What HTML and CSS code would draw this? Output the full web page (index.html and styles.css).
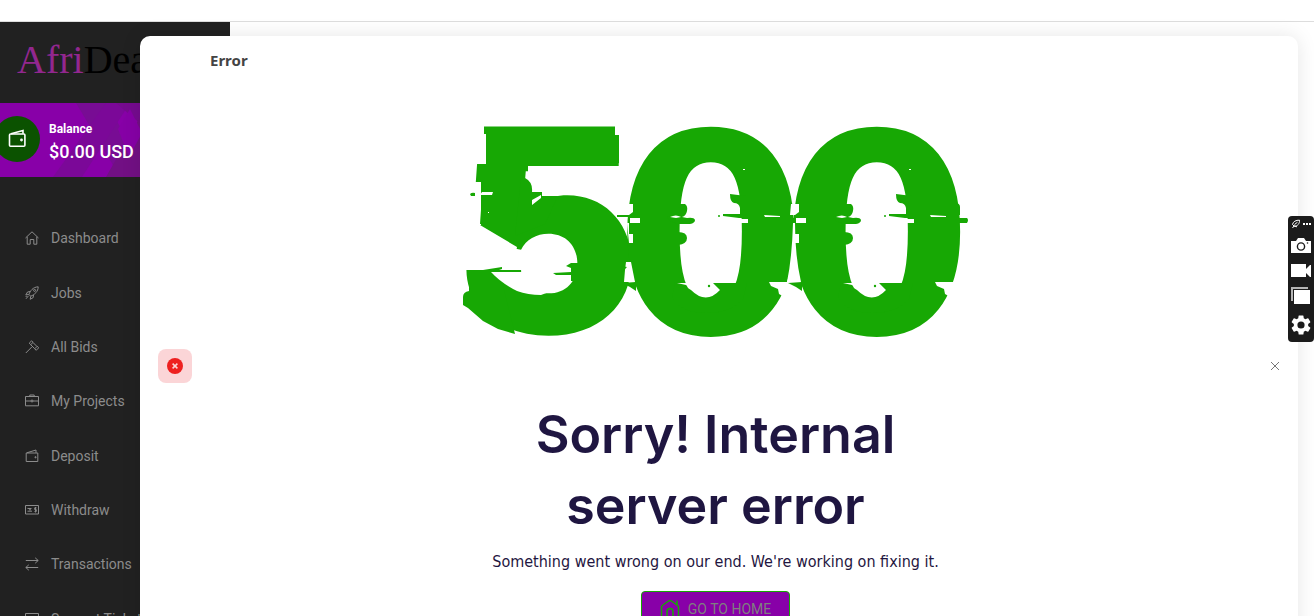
FILE: index.html
```html
<!DOCTYPE html>
<html lang="en">
<head>
  <meta charset="UTF-8">
  <meta name="viewport" content="width=device-width, initial-scale=1.0">
  <title>AfriDeal - Error 500</title>
  <link rel="stylesheet" href="styles.css">
</head>
<body>

  <header class="topbar"></header>

  <aside class="sidebar">
    <a class="logo" href="#"><span>Afri</span>Deal</a>

    <div class="balance">
      <svg class="balance-pattern" viewBox="0 0 180 74" aria-hidden="true">
        <path d="M26 0h30l44 74H70z" fill="#780c94"/>
        <path d="M56 0h24L32 74H3z" fill="#7b0898"/>
        <path d="M66 0h40l-14 22z" fill="#750b8e"/>
        <path d="M56 74l17-30 17-30 34 60z" fill="#721084"/>
        <path d="M68 26l12-20 12 24-13 24z" fill="#8600a6"/>
        <path d="M100 0h80v74h-50z" fill="#74108a"/>
      </svg>
      <div class="balance-icon">
        <svg viewBox="0 0 20 20" width="20" height="20" fill="none" stroke="#fff" stroke-width="1.6">
          <rect x="2.500" y="5" width="15.400" height="12.200" rx="1"/>
          <path d="M4 4.800L16 1.500v3.300"/>
          <circle cx="14.500" cy="11" r=".6"/>
        </svg>
      </div>
      <div class="balance-text">
        <span class="balance-label">Balance</span>
        <span class="balance-amount">$0.00 USD</span>
      </div>
    </div>

    <nav class="menu">
      <a class="menu-link" href="#">
        <svg viewBox="0 0 14 14"><path d="M.5 7L7 .8 13.500 7M2.200 5.800v7.400h3V8.500h3.600v4.700h3V5.800"/></svg>Dashboard</a>
      <a class="menu-link" href="#">
        <svg viewBox="0 0 14 14"><path d="M4 8.500C5 5 8 1 13.200.8 13.200 5.500 9.500 8.700 5.700 10.200zM5.200 5.500L2.500 6 .8 9l3-.6M8.500 8.800l-.3 2.800L5.200 13.300l.5-3M3.500 9.800L1 12.800M1.500 10L.8 11"/><circle cx="9.600" cy="4.400" r="1"/></svg>Jobs</a>
      <a class="menu-link" href="#">
        <svg viewBox="0 0 14 14"><path d="M.8 13L7 6.800M6.600.8L4.200 3.200l1.500 1.500L8.100 2.300zM5.500 4.500l4.300 4.300M8 2.500l4 4M12.300 6.200L9.700 8.800l1.500 1.500 2.500-2.500z"/></svg>All Bids</a>
      <a class="menu-link" href="#">
        <svg viewBox="0 0 14 14"><path d="M.5 2.500h13v9.300H.5zM4.800 2.400V1h4.400v1.400M.5 7h5.700M7.800 7h5.700M6.200 6.200h1.600v1.600H6.200z"/></svg>My Projects</a>
      <a class="menu-link" href="#">
        <svg viewBox="0 0 14 14"><path d="M1.200 4h11.600v8.500H1.200zM1.800 3.800L11 1v2.800M10 7.800h1v1h-1z"/></svg>Deposit</a>
      <a class="menu-link" href="#">
        <svg viewBox="0 0 14 14"><path d="M.5 2.500h13v8.500H.5zM2.500 5.500h4M2.500 8.200h4.500M4 6.800h2M11.500 4.800H9.700v1.800h1.600v1.900H9.500M10.500 4v5.500"/></svg>Withdraw</a>
      <a class="menu-link" href="#">
        <svg viewBox="0 0 14 14"><path d="M.8 3.500h12.400M10.200.8l3 2.700-3 2.700M13.200 10.500H.8M3.800 7.800l-3 2.700 3 2.700"/></svg>Transactions</a>
      <a class="menu-link" href="#">
        <svg viewBox="0 0 14 14"><path d="M.5 1.500h13v11H.5zM3 5h8M3 8h8"/></svg>Support Tickets</a>
    </nav>
  </aside>

  <main class="toast" role="alert">
    <div class="toast-icon">
      <svg viewBox="0 0 16 16" width="16" height="16"><circle cx="8" cy="8" r="8" fill="#ee2020"/><path d="M5.600 5.600l4.800 4.800M10.400 5.600l-4.800 4.800" stroke="#fbd5d7" stroke-width="1.500"/></svg>
    </div>

    <div class="toast-body">
      <strong class="toast-title">Error</strong>

      <section class="error">
        <svg class="error-code" viewBox="0 0 510 216">
          <defs>
            <!-- glitch pieces of one zero -->
            <g id="glitch">
              <path d="M206 93l11-2v-11h7q3 2 2 7t-5 6l5 1q7-1 8 2 0 3-5 4h-12l-8-3z"/>
              <path d="M217 108q9 0 9 6t-9 7z"/>
              <path d="M262 90h17v-6q-1-5-6-5-4-1-4-9l16 2v22h-7l-16-2z"/>
              <path d="M318 79h10q5 0 5 4v8h-15zM315 94h25q2 2 0 5h-25z"/>
              <path d="M214 158h3l13 8q15 15 29 0l-7-7h34l-4 16q-12 14-37 14t-34-16z"/>
              <circle cx="258" cy="92" r="1"/>
              <circle cx="248" cy="162" r="1.200"/>
              <g fill="#fff">
                <path d="M277 95h10v4h-10zM209 93q6-3 11 0l-5 1zM216 159h15v5l-6-3zM303 91l16 1v1h-15zM282 45h2v1h-2z"/>
                <path d="M308 158h25v2l-8 14-7-4-1-5-7-3z"/>
                <path d="M164 80h8v8l-4 3h-5zM169 94h10v5h-10zM166 99h2v11h4v9h-4z"/>
              </g>
              <path d="M161 159l14-1v9l-6-4z"/>
            </g>
          </defs>
          <text x="-9 153 319" y="209"><tspan class="five">5</tspan>00</text>
          <use href="#glitch"/>
          <use href="#glitch" x="166"/>

          <!-- gaps between the digits -->
          <path d="M332 99h2q0 33 6 59h-14q5-24 6-59zM165 138h5l4 20h-11l1-12z" fill="#fff"/>

          <!-- glitch pieces of the five -->
          <g fill="#fff">
            <path d="M10 0h13v10h2v30H10zM8 58h12v43H8z"/>
            <path d="M67 42h92v6H67zM154 0h6v11h-6z"/>
          </g>
          <path d="M152 11h6v28l-6 2zM25 11h6v30h-6zM18 40h12v18H16q0-16 2-18zM9 70q2-2 5-1v3h-4z"/>
          <path d="M60 54h4q8 4 7 14h10v4h16L84 100 54 112zM22 56h12v44H19l2-29z"/>
          <path d="M8 146h14l19-3v2l-9 3 10 14 12 48-17-5-15-8L7 184l-5-3v-8q0-5 6-6zM92 149l18-1v-4l-5-2 5-3h14v18h-14v-6h-15zM156 91h14v2h-14zM160 142l6 1-5 5z"/>
          <g fill="#fff">
            <path d="M30 148h44l14 20-8 3q-13 0-24-4-16-8-26-19z"/>
            <path d="M21 68h11l-1 3H19zM10 101h9l37 22-1 5-45-8zM27 88h1v1h-1zM71 76l9-5v3l-9 7z"/>
          </g>
        </svg>
        <h1>Sorry! Internal server error</h1>
        <p>Something went wrong on our end. We're working on fixing it.</p>
        <a class="home-btn" href="#">
          <svg viewBox="0 0 20 22" width="20" height="22" fill="none" stroke="#17a804" stroke-width="1.500"><path d="M3 21q-1.500 0-1.500-2V9Q1.500 8 3 7l5.500-4q1.500-1 3 0l5.500 4q1.500 1 1.500 2v10q0 2-1.500 2zM17 7V2.500M7 21v-7.500a3 3 0 0 1 6 0V21"/></svg>
          Go to home
        </a>
      </section>
    </div>

    <button class="toast-close" type="button" aria-label="Close">
      <svg viewBox="0 0 10 10" width="10" height="10"><path d="M1 1l8 8M9 1L1 9" stroke="#777"/></svg>
    </button>
  </main>

  <div class="recorder">
    <div class="recorder-head">
      <svg viewBox="0 0 10 10" width="10" height="10" fill="none" stroke="#fff"><path d="M1.500 5.500C2 2.500 5 1 8.500 1.200 8.800 4 7 7.500 3 7zM3.500 5.500l3-2.300M1.500 9l1.500-2 3 .8"/></svg>
      <svg viewBox="0 0 9 10" width="9" height="10" fill="#fff"><path d="M0 4h2v2H0zM3 4h2v2H3zM6 4h2v2H6z"/></svg>
    </div>
    <button type="button" aria-label="Take photo"><svg viewBox="0 0 20 16" width="20" height="16"><path d="M0 3h5l2-3h6l2 3h5v12H0z" fill="#fff"/><circle cx="10" cy="8.500" r="3.600" fill="none" stroke="#1b1b1b" stroke-width="1.400"/><circle cx="16.500" cy="5" r=".8" fill="#1b1b1b"/></svg></button>
    <button type="button" aria-label="Record video"><svg viewBox="0 0 20 16" width="20" height="16" fill="#fff"><path d="M0 2h15v5l4-4h1v12h-1l-4-4v4H0z"/></svg></button>
    <button type="button" aria-label="Capture window"><svg viewBox="0 0 20 18" width="20" height="18"><path d="M0 14V0h17v2H2v12z" fill="#b5b5b5"/><path d="M3 3h16v14H3z" fill="#fff"/></svg></button>
    <button type="button" aria-label="Settings"><svg viewBox="0 0 24 24" width="24" height="24" fill="#fff"><path d="M19.140 12.940c.04-.3.06-.61.06-.94s-.02-.64-.07-.94l2.030-1.580a.49.49 0 0 0 .12-.61l-1.920-3.320a.49.49 0 0 0-.59-.22l-2.390.96a7 7 0 0 0-1.620-.94l-.36-2.540A.48.48 0 0 0 13.920 2.400h-3.840a.48.48 0 0 0-.47.41l-.36 2.540c-.59.24-1.130.57-1.620.94l-2.390-.96a.48.48 0 0 0-.59.22L2.740 8.870a.48.48 0 0 0 .12.61l2.030 1.580a7 7 0 0 0 0 1.880l-2.030 1.580a.49.49 0 0 0-.12.61l1.920 3.320c.12.22.37.29.59.22l2.390-.96c.5.380 1.030.7 1.620.94l.36 2.540c.05.24.24.41.48.41h3.840c.24 0 .44-.17.47-.41l.36-2.540a7 7 0 0 0 1.620-.94l2.390.96c.22.080.47 0 .59-.22l1.920-3.320a.48.48 0 0 0-.12-.61zM12 15.600a3.600 3.600 0 1 1 0-7.200 3.600 3.600 0 0 1 0 7.200z"/></svg></button>
  </div>

</body>
</html>
```
FILE: styles.css
```css
* {
  box-sizing: border-box;
}

body {
  margin: 0;
  height: 100vh;
  overflow: hidden;
  position: relative;
  background-color: #fff;
  font-family: Roboto, sans-serif;
}

a {
  text-decoration: none;
}

button {
  border: 0;
  padding: 0;
  background: none;
  cursor: pointer;
}

.topbar {
  height: 22px;
  border-bottom: 1px solid #ddd;
}

/* sidebar */

.sidebar {
  width: 230px;
  background-color: #212121;
}

.logo {
  display: block;
  padding: 16px 17px 21px;
  font-family: "Liberation Serif", serif;
  font-size: 40px;
  line-height: 44px;
  color: #000;
}

.logo span {
  color: #92278f;
}

.balance {
  display: flex;
  align-items: center;
  gap: 9px;
  height: 74px;
  padding-bottom: 2px;
  position: relative;
  overflow: hidden;
  background-color: #8800a8;
  color: #fff;
}

.balance-pattern {
  position: absolute;
  top: 0;
  right: 0;
  width: 180px;
  height: 74px;
}

.balance-icon {
  display: flex;
  align-items: center;
  justify-content: center;
  position: relative;
  width: 46px;
  height: 46px;
  margin-left: -6px;
  border-radius: 50%;
  background-color: #0b5200;
}

.balance-text {
  display: flex;
  flex-direction: column;
  position: relative;
  padding-top: 6px;
}

.balance-label {
  font-size: 12px;
  font-weight: 700;
  line-height: 20px;
}

.balance-amount {
  font-size: 18px;
  font-weight: 500;
  line-height: 26px;
}

.menu {
  display: grid;
  grid-auto-rows: 1fr;
  min-height: 435px;
  margin-top: 34px;
}

.menu-link {
  display: flex;
  align-items: center;
  gap: 12px;
  padding-left: 25px;
  font-size: 14px;
  color: #8c8c8c;
}

.menu-link svg {
  width: 14px;
  height: 14px;
  fill: none;
  stroke: #8c8c8c;
}

/* toast */

.toast {
  display: flex;
  align-items: center;
  gap: 18px;
  position: absolute;
  top: 36px;
  left: 140px;
  right: 16px;
  padding: 14px 14px 14px 18px;
  border-radius: 10px;
  background-color: #fff;
  box-shadow: 0 0 20px rgba(0, 0, 0, 0.1);
}

.toast-icon {
  display: flex;
  align-items: center;
  justify-content: center;
  width: 34px;
  height: 34px;
  border-radius: 8px;
  background-color: #fbd5d7;
}

.toast-body {
  flex: 1;
  padding-right: 27px;
}

.toast-title {
  display: block;
  font-family: "Noto Sans", sans-serif;
  font-size: 15px;
  line-height: 20px;
  color: #444;
}

.error {
  display: flex;
  flex-direction: column;
  align-items: center;
  padding: 54px 0;
  text-align: center;
  color: #1f1641;
}

.error-code {
  width: 510px;
  height: 216px;
  overflow: visible;
  fill: #17a804;
}

.error-code text {
  font-family: "DejaVu Sans", sans-serif;
  font-size: 278px;
  font-weight: 700;
}

.error-code .five {
  font-family: Inter, sans-serif;
  font-size: 284px;
  font-weight: 900;
}

.error h1 {
  max-width: 440px;
  margin: 59px 0 0;
  font-family: Inter, sans-serif;
  font-size: 52px;
  font-weight: 600;
  line-height: 71px;
}

.error p {
  margin: 7px 0 0;
  font-family: "DejaVu Sans Condensed", "DejaVu Sans", sans-serif;
  font-size: 16px;
  line-height: 28px;
}

.home-btn {
  display: flex;
  align-items: center;
  gap: 8px;
  margin-top: 15px;
  padding: 6px 18px;
  border: 1px solid #17a804;
  border-radius: 4px;
  background-color: #8800a8;
  color: #7f7f7f;
  font-size: 14px;
  text-transform: uppercase;
}

.toast-close {
  display: flex;
  align-items: center;
  justify-content: center;
  width: 18px;
  height: 18px;
}

/* screen recorder widget */

.recorder {
  display: flex;
  flex-direction: column;
  align-items: center;
  justify-content: space-between;
  position: absolute;
  top: 216px;
  right: 0;
  width: 26px;
  height: 126px;
  padding: 3px 0 5px;
  border-radius: 4px;
  background-color: #1b1b1b;
}

.recorder-head {
  display: flex;
  gap: 2px;
}

.recorder svg {
  display: block;
}
```
